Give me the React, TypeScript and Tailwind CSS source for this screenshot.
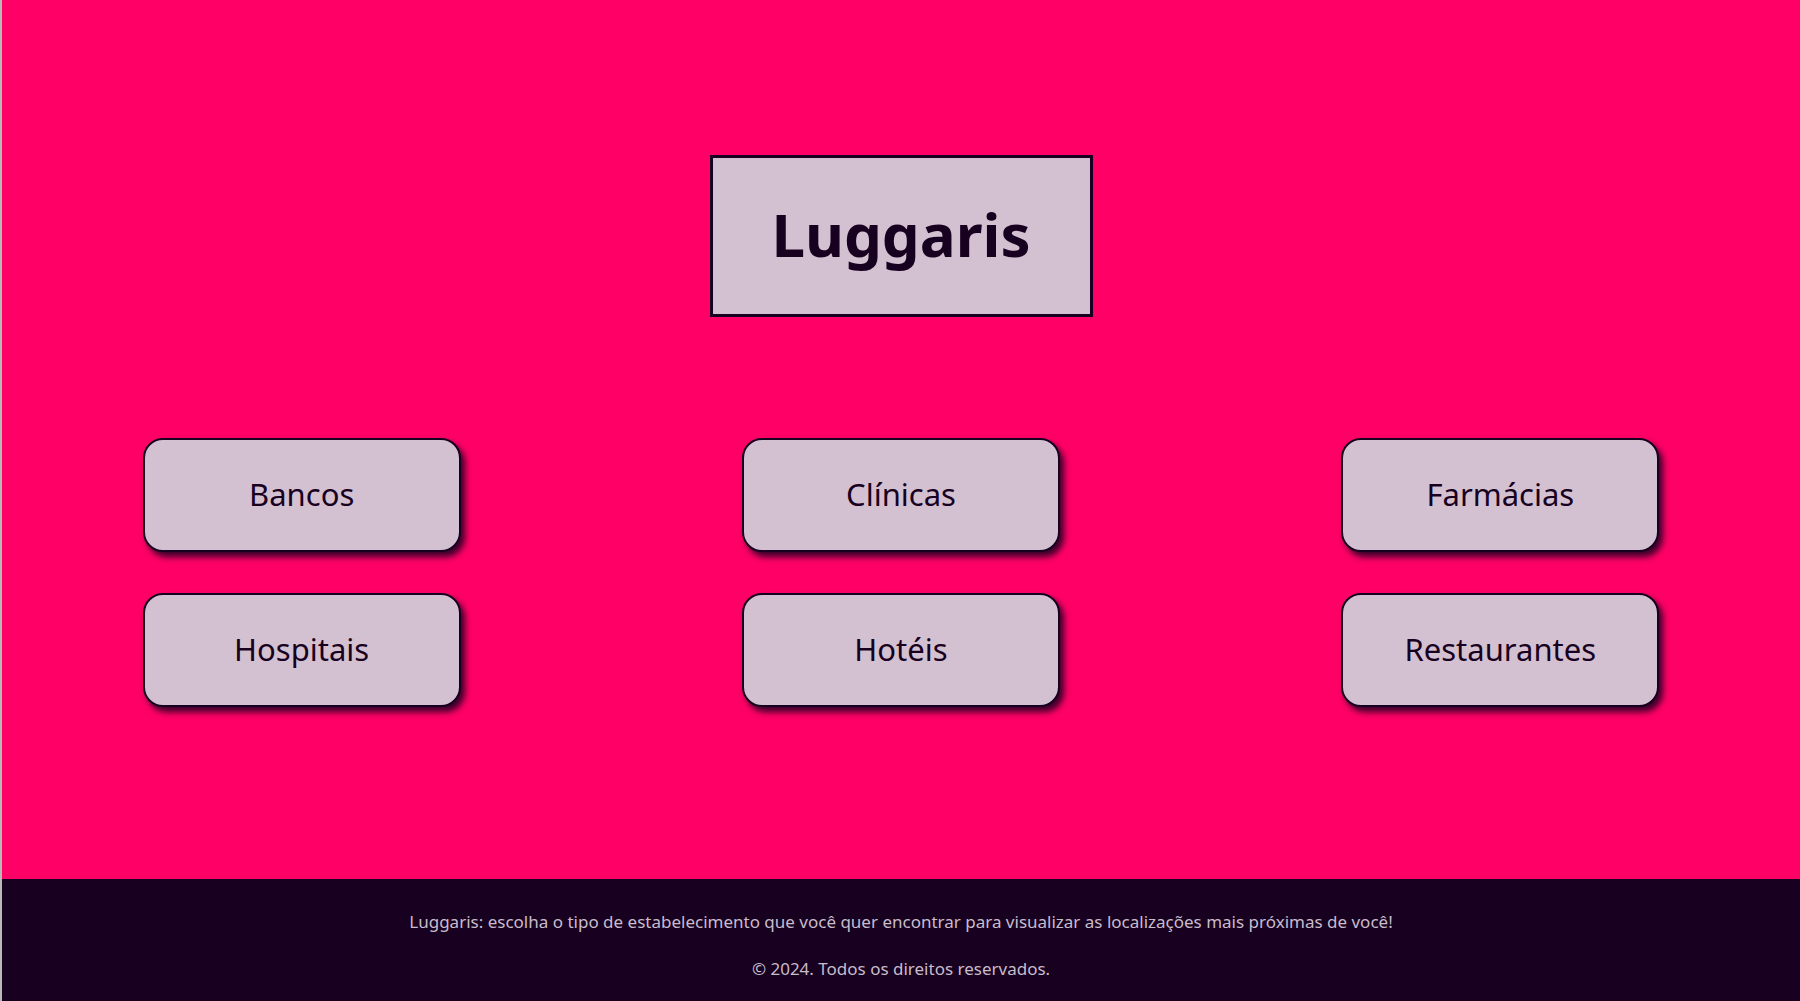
import React from 'react';

const LUGARES = ['Bancos', 'Clínicas', 'Farmácias', 'Hospitais', 'Hotéis', 'Restaurantes'];

const font = { fontFamily: '"Noto Sans", "Open Sans", sans-serif' };

export default function App() {
  return (
    <div className="min-h-screen flex flex-col border-l-2 border-[#b9b9b9] bg-[#ff0066]" style={font}>
      <main className="flex-1 flex flex-col items-center pt-[155px]">
        <div className="w-[383px] h-[162px] border-[3px] border-[#170020] bg-[#d3c0d0] flex items-center justify-center">
          <h1 className="text-[60px] font-bold text-[#170020] leading-none pb-[4px]">Luggaris</h1>
        </div>

        <div className="w-full grid grid-cols-3 justify-items-center gap-y-[41px] mt-[121px]">
          {LUGARES.map((nome) => (
            <button
              key={nome}
              className="w-[318px] h-[114px] rounded-[20px] border-2 border-[#170020] bg-[#d3c0d0] text-[31px] text-[#170020] pb-[2px] shadow-[4px_5px_6px_rgba(23,0,32,0.85)]"
            >
              {nome}
            </button>
          ))}
        </div>
      </main>

      <footer className="h-[122px] bg-[#170020] text-[#c9bccb] text-[17px] flex flex-col items-center pt-[30px] gap-[21px] leading-[26px]">
        <p>Luggaris: escolha o tipo de estabelecimento que você quer encontrar para visualizar as localizações mais próximas de você!</p>
        <p>© 2024. Todos os direitos reservados.</p>
      </footer>
    </div>
  );
}
